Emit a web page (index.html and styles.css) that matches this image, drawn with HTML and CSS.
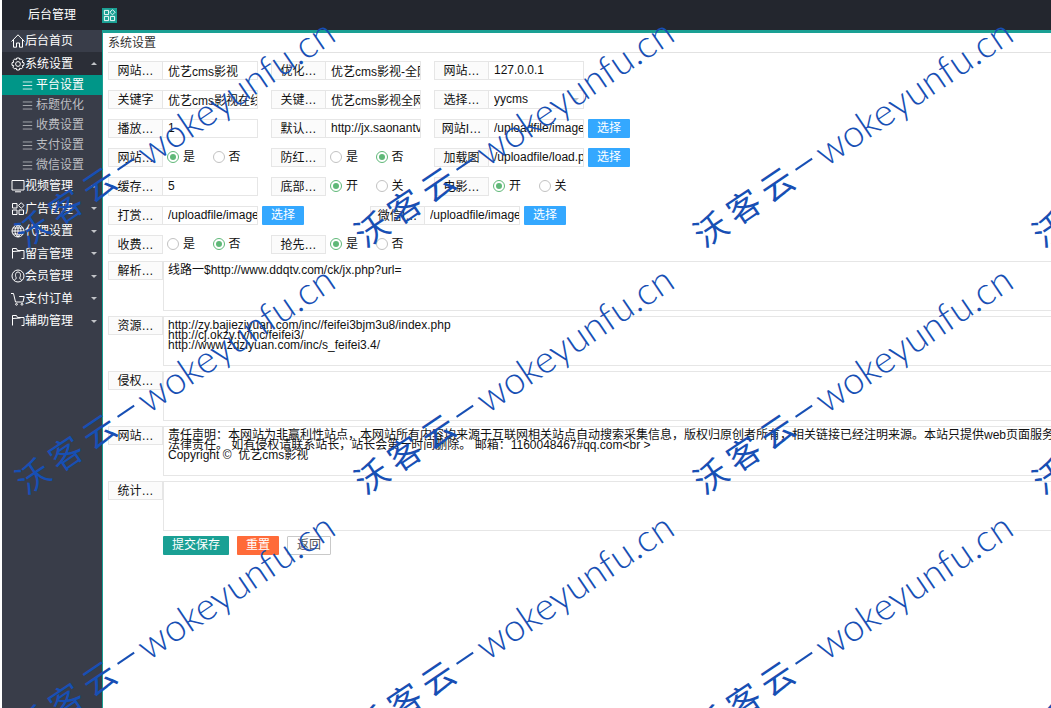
FILE: index.html
```html
<!DOCTYPE html>
<html lang="zh-CN">
<head>
<meta charset="utf-8">
<title>后台管理</title>
<link rel="stylesheet" href="styles.css">
</head>
<body>
<svg class="defs" aria-hidden="true">
  <symbol id="i-home" viewBox="0 0 14 14"><path d="M.5 7.500 7 .8l6.500 6.700M2.500 6v7.200h3V9h3v4.200h3V6"/></symbol>
  <symbol id="i-gear" viewBox="0 0 14 14"><path d="M5.700 1h2.600l.4 1.600 1.400-.8 1.900 1.900-.9 1.500 1.900.5v2.600l-1.800.4.8 1.500-1.800 1.800-1.500-.8L8.300 13H5.700l-.5-1.800-1.500.8-1.800-1.800.9-1.500L1 8.300V5.700l1.800-.5-.8-1.500 1.900-1.800 1.400.8z"/><circle cx="7" cy="7" r="2.400"/></symbol>
  <symbol id="i-list" viewBox="0 0 14 14"><path d="M1 2.500h12M1 7h12M1 11.500h12"/></symbol>
  <symbol id="i-screen" viewBox="0 0 14 14"><path d="M1 1.500h12v9.500H1zM4 12.800h6"/></symbol>
  <symbol id="i-blocks" viewBox="0 0 14 14"><path d="M1.500 1.500h4.500v4.500h-4.500zM1.500 8h4.500v4.500h-4.500zM8 8h4.500v4.500h-4.500zM10.200.7 13 3.500l-2.800 2.800L7.400 3.500z"/></symbol>
  <symbol id="i-globe" viewBox="0 0 14 14"><circle cx="7" cy="7" r="6"/><path d="M1 7h12M2 4h10M2 10h10M7 1v12M7 1C3 4 3 10 7 13M7 1c4 3 4 9 0 12"/></symbol>
  <symbol id="i-folder" viewBox="0 0 14 14"><path d="M1.500 11.500V1.500h4L6.500 3.500h6.500v8h-2.500M1.500 4.500l8-.5"/></symbol>
  <symbol id="i-user" viewBox="0 0 14 14"><circle cx="7" cy="7" r="6"/><path d="M3.500 11.500c0-1.500 2-1.500 2-2.500C4 7.500 4 3 7 3s3 4.500 1.500 6c0 1 2 1 2 2.500"/></symbol>
  <symbol id="i-cart" viewBox="0 0 14 14"><path d="M0 1.500h2.500L4.500 10H12l1.200-5.500h-5"/><circle cx="5.500" cy="12.300" r=".9"/><circle cx="11" cy="12.300" r=".9"/></symbol>
</svg>

<div class="app">
  <header class="topbar">
    <h1 class="brand">后台管理</h1>
    <button class="toggle" type="button" aria-label="菜单"><svg class="icon"><use href="#i-blocks"/></svg></button>
  </header>

  <nav class="side">
    <ul class="menu">
      <li><a class="item" href="#"><svg class="icon"><use href="#i-home"/></svg>后台首页</a></li>
      <li><a class="item open" href="#"><svg class="icon"><use href="#i-gear"/></svg>系统设置<i class="caret up"></i></a>
        <ul class="submenu">
          <li><a class="sub active" href="#"><svg class="icon"><use href="#i-list"/></svg>平台设置</a></li>
          <li><a class="sub" href="#"><svg class="icon"><use href="#i-list"/></svg>标题优化</a></li>
          <li><a class="sub" href="#"><svg class="icon"><use href="#i-list"/></svg>收费设置</a></li>
          <li><a class="sub" href="#"><svg class="icon"><use href="#i-list"/></svg>支付设置</a></li>
          <li><a class="sub" href="#"><svg class="icon"><use href="#i-list"/></svg>微信设置</a></li>
        </ul>
      </li>
      <li><a class="item" href="#"><svg class="icon"><use href="#i-screen"/></svg>视频管理<i class="caret"></i></a></li>
      <li><a class="item" href="#"><svg class="icon"><use href="#i-blocks"/></svg>广告管理<i class="caret"></i></a></li>
      <li><a class="item" href="#"><svg class="icon"><use href="#i-globe"/></svg>代理设置<i class="caret"></i></a></li>
      <li><a class="item" href="#"><svg class="icon"><use href="#i-folder"/></svg>留言管理<i class="caret"></i></a></li>
      <li><a class="item" href="#"><svg class="icon"><use href="#i-user"/></svg>会员管理<i class="caret"></i></a></li>
      <li><a class="item" href="#"><svg class="icon"><use href="#i-cart"/></svg>支付订单<i class="caret"></i></a></li>
      <li><a class="item" href="#"><svg class="icon"><use href="#i-folder"/></svg>辅助管理<i class="caret"></i></a></li>
    </ul>
  </nav>

  <main class="main">
    <h2 class="title">系统设置</h2>
    <form class="form">
      <div class="row">
        <div class="field"><label class="name" for="f1">网站…</label><input class="box" id="f1" type="text" value="优艺cms影视"></div>
        <div class="field"><label class="name" for="f2">优化…</label><input class="box" id="f2" type="text" value="优艺cms影视-全网影视"></div>
        <div class="field"><label class="name" for="f3">网站…</label><input class="box" id="f3" type="text" value="127.0.0.1"></div>
      </div>
      <div class="row">
        <div class="field"><label class="name" for="f4">关键字</label><input class="box" id="f4" type="text" value="优艺cms影视在线观看"></div>
        <div class="field"><label class="name" for="f5">关键…</label><input class="box" id="f5" type="text" value="优艺cms影视全网影视"></div>
        <div class="field"><label class="name" for="f6">选择…</label><span class="pick"><select class="box" id="f6"><option>yycms</option></select><i class="caret"></i></span></div>
      </div>
      <div class="row">
        <div class="field"><label class="name" for="f7">播放…</label><input class="box" id="f7" type="text" value="1"></div>
        <div class="field"><label class="name" for="f8">默认…</label><input class="box" id="f8" type="text" value="http://jx.saonantv.com"></div>
        <div class="field"><label class="name" for="f9">网站I…</label><input class="box" id="f9" type="text" value="/uploadfile/image"><button class="btn blue" type="button">选择</button></div>
      </div>
      <div class="row">
        <div class="field" role="radiogroup" aria-label="网站"><span class="name">网站…</span><span class="radios"><label><input type="radio" name="a" checked>是</label><label><input type="radio" name="a">否</label></span></div>
        <div class="field" role="radiogroup" aria-label="防红"><span class="name">防红…</span><span class="radios"><label><input type="radio" name="b">是</label><label><input type="radio" name="b" checked>否</label></span></div>
        <div class="field"><label class="name" for="f10">加载图</label><input class="box" id="f10" type="text" value="/uploadfile/load.png"><button class="btn blue" type="button">选择</button></div>
      </div>
      <div class="row">
        <div class="field"><label class="name" for="f11">缓存…</label><input class="box" id="f11" type="text" value="5"></div>
        <div class="field" role="radiogroup" aria-label="底部"><span class="name">底部…</span><span class="radios"><label><input type="radio" name="c" checked>开</label><label><input type="radio" name="c">关</label></span></div>
        <div class="field" role="radiogroup" aria-label="电影"><span class="name">电影…</span><span class="radios"><label><input type="radio" name="d" checked>开</label><label><input type="radio" name="d">关</label></span></div>
      </div>
      <div class="row wide">
        <div class="field"><label class="name" for="f12">打赏…</label><input class="box" id="f12" type="text" value="/uploadfile/image"><button class="btn blue" type="button">选择</button></div>
        <div class="field"><label class="name" for="f13">微信I…</label><input class="box" id="f13" type="text" value="/uploadfile/image"><button class="btn blue" type="button">选择</button></div>
      </div>
      <div class="row">
        <div class="field" role="radiogroup" aria-label="收费"><span class="name">收费…</span><span class="radios"><label><input type="radio" name="e">是</label><label><input type="radio" name="e" checked>否</label></span></div>
        <div class="field" role="radiogroup" aria-label="抢先"><span class="name">抢先…</span><span class="radios"><label><input type="radio" name="g" checked>是</label><label><input type="radio" name="g">否</label></span></div>
      </div>

      <div class="areas">
        <div class="area"><label class="name" for="t1">解析…</label><textarea id="t1" wrap="off">线路一$http://www.ddqtv.com/ck/jx.php?url=</textarea></div>
        <div class="area"><label class="name" for="t2">资源…</label><textarea id="t2" wrap="off">http://zy.bajieziyuan.com/inc//feifei3bjm3u8/index.php
http://cj.okzy.tv/inc/feifei3/
http://www.zdziyuan.com/inc/s_feifei3.4/</textarea></div>
        <div class="area"><label class="name" for="t3">侵权…</label><textarea id="t3" wrap="off"></textarea></div>
        <div class="area"><label class="name" for="t4">网站…</label><textarea id="t4" wrap="off">责任声明：本网站为非赢利性站点，本网站所有内容均来源于互联网相关站点自动搜索采集信息，版权归原创者所有，相关链接已经注明来源。本站只提供web页面服务
法律责任。 如有侵权请联系站长，站长会第一时间删除。 邮箱：1160048467#qq.com&lt;br &gt;
Copyright ©&nbsp; 优艺cms影视</textarea></div>
        <div class="area"><label class="name" for="t5">统计…</label><textarea id="t5" wrap="off"></textarea></div>
      </div>

      <div class="actions">
        <button class="btn green" type="submit">提交保存</button>
        <button class="btn orange" type="reset">重置</button>
        <button class="btn plain" type="button">返回</button>
      </div>
    </form>
  </main>
</div>

<div class="watermarks" aria-hidden="true">
  <div class="mark"><p><span>沃</span><span>客</span><span>云</span><i></i>wokeyunfu.cn</p></div>
  <div class="mark"><p><span>沃</span><span>客</span><span>云</span><i></i>wokeyunfu.cn</p></div>
  <div class="mark"><p><span>沃</span><span>客</span><span>云</span><i></i>wokeyunfu.cn</p></div>
  <div class="mark"><p><span>沃</span><span>客</span><span>云</span><i></i>wokeyunfu.cn</p></div>
  <div class="mark"><p><span>沃</span><span>客</span><span>云</span><i></i>wokeyunfu.cn</p></div>
  <div class="mark"><p><span>沃</span><span>客</span><span>云</span><i></i>wokeyunfu.cn</p></div>
  <div class="mark"><p><span>沃</span><span>客</span><span>云</span><i></i>wokeyunfu.cn</p></div>
  <div class="mark"><p><span>沃</span><span>客</span><span>云</span><i></i>wokeyunfu.cn</p></div>
  <div class="mark"><p><span>沃</span><span>客</span><span>云</span><i></i>wokeyunfu.cn</p></div>
  <div class="mark"><p><span>沃</span><span>客</span><span>云</span><i></i>wokeyunfu.cn</p></div>
  <div class="mark"><p><span>沃</span><span>客</span><span>云</span><i></i>wokeyunfu.cn</p></div>
  <div class="mark"><p><span>沃</span><span>客</span><span>云</span><i></i>wokeyunfu.cn</p></div>
</div>
</body>
</html>
```

FILE: styles.css
```css
* { box-sizing: border-box; }

body,
button,
input,
select,
textarea {
  margin: 0;
  font: 12px/16px "Liberation Sans", "Noto Sans CJK SC", sans-serif;
  color: #111;
}

body { background: #fff; }
h1, h2, p, ul { margin: 0; padding: 0; font-size: 12px; font-weight: 400; }
ul { list-style: none; }
a { color: inherit; text-decoration: none; }
.defs { display: none; }

.icon {
  flex: none;
  width: 14px;
  height: 14px;
  fill: none;
  stroke: currentColor;
  stroke-width: 1;
}

.app {
  display: grid;
  grid-template: 30px 1fr / 101px minmax(0, 1fr);
  min-height: 100vh;
  padding-left: 2px;
}

/* header */
.topbar {
  grid-column: 1 / -1;
  display: flex;
  align-items: center;
  background: #23262e;
}
.brand { width: 100px; text-align: center; color: #fff; }
.toggle {
  display: grid;
  place-items: center;
  width: 15px;
  height: 15px;
  padding: 0;
  border: 0;
  background: #1aa094;
  color: #fff;
}
.toggle .icon { width: 13px; height: 13px; }

/* navigation */
.side { background: #393d49; color: #fff; border-right: 1px solid #1aa094; }
.item {
  display: flex;
  align-items: center;
  height: 22px;
  padding: 0 5px 0 9px;
}
.menu > li:nth-child(even) > .item { height: 23px; }
.item.open { background: #2b2e37; }
.sub {
  display: flex;
  align-items: center;
  height: 20px;
  gap: 3px;
  padding-left: 20px;
  color: #bdbec2;
}
.sub .icon { width: 11px; height: 11px; }
.sub.active { background: #009688; color: #fff; }
.caret {
  margin-left: auto;
  border: 3px solid transparent;
  border-top-color: #c2c4c8;
  border-bottom-width: 0;
}
.caret.up { border-width: 0 3px 3px; border-bottom-color: #c2c4c8; }

/* form */
.main { border-top: 3px solid #1aa094; padding-left: 5px; overflow: hidden; }
.title {
  height: 20px;
  line-height: 20px;
  border-bottom: 1px solid #e2e2e2;
  color: #333;
}
.form { padding-top: 8px; }
.row { display: flex; gap: 13px; margin-bottom: 10px; }
.row.wide { gap: 66px; }
.field, .area { display: flex; }
.name {
  flex: none;
  width: 55px;
  height: 19px;
  line-height: 18px;
  border: 1px solid #e6e6e6;
  background: #fbfbfb;
  text-align: center;
  white-space: nowrap;
}
.box {
  appearance: none;
  width: 96px;
  height: 19px;
  margin-left: -1px;
  padding: 0 0 1px 5px;
  border: 1px solid #e6e6e6;
  border-radius: 0;
  background: #fff;
}
.pick { position: relative; display: flex; }
.pick .caret { position: absolute; right: 5px; top: 8px; }
.radios { display: flex; width: 95px; padding-left: 4px; }
.radios label { display: flex; align-items: center; gap: 4px; width: 46px; height: 18px; }
.radios input {
  appearance: none;
  display: grid;
  place-items: center;
  width: 12px;
  height: 12px;
  margin: 0;
  border: 1px solid #c2c2c2;
  border-radius: 50%;
}
.radios input:checked { border-color: #5fb878; }
.radios input:checked::before {
  content: "";
  width: 6px;
  height: 6px;
  border-radius: 50%;
  background: #5fb878;
}

.btn {
  height: 19px;
  padding: 0 9px;
  border: 0;
  border-radius: 1px;
  line-height: 19px;
  color: #fff;
}
.field .btn { margin-left: 4px; }
.blue { background: #34a8ff; }
.green { background: #1aa094; }
.orange { background: #ff6b39; }
.plain { border: 1px solid #c9c9c9; background: #fff; color: #555; line-height: 17px; }

.areas { display: grid; gap: 5px; margin-top: -3px; }
textarea {
  flex: 1;
  height: 50px;
  padding: 3px 0 0 4px;
  border: 1px solid #e6e6e6;
  border-right: 0;
  line-height: 10px;
  resize: none;
  overflow: hidden;
}
.actions { display: flex; gap: 8px; padding: 5px 0 0 55px; }

/* repeating diagonal mark over the page */
.watermarks {
  position: absolute;
  inset: 0;
  display: grid;
  grid-template-columns: repeat(4, 339px);
  grid-auto-rows: 247px;
  padding: 8px 0 0 4px;
  overflow: hidden;
  pointer-events: none;
}
.mark { display: flex; align-items: center; justify-content: center; }
.mark p {
  display: flex;
  align-items: center;
  flex: none;
  gap: 7px;
  font: 300 38px/40px Lato, "Noto Sans CJK SC", sans-serif;
  color: #174fb4;
  transform: rotate(-34deg);
}
.mark span { font: 400 33px/40px "Noto Sans CJK SC", sans-serif; }
.mark i { width: 20px; height: 2px; background: #174fb4; }
```
